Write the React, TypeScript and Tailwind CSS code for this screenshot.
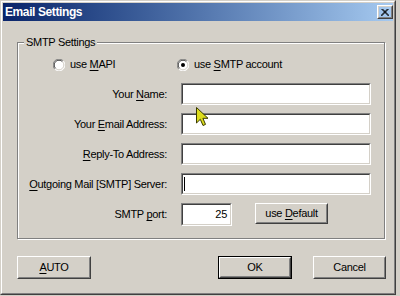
import React from "react";

const font = { fontFamily: '"Liberation Sans", Arial, sans-serif' };

function U({ children }: { children: React.ReactNode }) {
  return <span className="underline underline-offset-[2px] decoration-1">{children}</span>;
}

function Sunken({ className = "", children }: { className?: string; children?: React.ReactNode }) {
  return (
    <div className={`border border-t-[#808080] border-l-[#808080] border-r-white border-b-white ${className}`}>
      <div className="h-full w-full border border-t-[#404040] border-l-[#404040] border-r-[#d4d0c8] border-b-[#d4d0c8] bg-white flex items-center">
        {children}
      </div>
    </div>
  );
}

function Button({
  className = "",
  children,
  isDefault = false,
}: {
  className?: string;
  children: React.ReactNode;
  isDefault?: boolean;
}) {
  const inner = (
    <div className="h-full w-full border border-t-white border-l-white border-r-[#404040] border-b-[#404040]">
      <div className="h-full w-full border border-t-[#d4d0c8] border-l-[#d4d0c8] border-r-[#808080] border-b-[#808080] flex items-center justify-center text-black">
        {children}
      </div>
    </div>
  );
  if (isDefault) {
    return <div className={`border border-black ${className}`}>{inner}</div>;
  }
  return <div className={className}>{inner}</div>;
}

function Radio({ checked }: { checked: boolean }) {
  return (
    <svg width="12" height="12" viewBox="0 0 12 12" className="shrink-0">
      <circle cx="6" cy="6" r="5.5" fill="#ffffff" />
      <path d="M1.8 10.2 A5.5 5.5 0 0 1 10.2 1.8" stroke="#808080" strokeWidth="1" fill="none" />
      <path d="M2.6 9.4 A4.5 4.5 0 0 1 9.4 2.6" stroke="#404040" strokeWidth="1" fill="none" />
      <path d="M10.2 1.8 A5.5 5.5 0 0 1 1.8 10.2" stroke="#ffffff" strokeWidth="1" fill="none" />
      <path d="M9.4 2.6 A4.5 4.5 0 0 1 2.6 9.4" stroke="#d4d0c8" strokeWidth="1" fill="none" />
      {checked && <circle cx="6" cy="6" r="2" fill="#000000" />}
    </svg>
  );
}

export default function App() {
  return (
    <div
      className="w-[400px] h-[296px] bg-[#d4d0c8] relative overflow-hidden text-[11px] tracking-[-0.3px] text-black"
      style={font}
    >
      <div className="w-[396px] h-[295px] border border-t-[#d4d0c8] border-l-[#d4d0c8] border-r-[#404040] border-b-[#404040]">
        <div className="h-full w-full border border-t-white border-l-white border-r-[#808080] border-b-[#808080] p-px flex flex-col">
          {/* Title bar */}
          <div className="h-[18px] shrink-0 flex items-center justify-between pl-[2px] bg-gradient-to-r from-[#0a246a] to-[#a6caf0]">
            <span className="text-white font-bold text-[12px] tracking-[-0.4px] leading-none">Email Settings</span>
            <Button className="w-[16px] h-[14px]">
              <svg width="8" height="7" viewBox="0 0 8 7">
                <path d="M0.5 0 L7.5 7 M1.5 0 L8.5 7 M7.5 0 L0.5 7 M6.5 0 L-0.5 7" stroke="#000" strokeWidth="1" />
              </svg>
            </Button>
          </div>

          {/* Body */}
          <div className="flex-1 flex flex-col pl-[14px] pt-[21px]">
            <div className="relative w-[368px] h-[197px] border border-[#808080] shadow-[1px_1px_0_0_#ffffff,inset_1px_1px_0_0_#ffffff] flex flex-col pt-[15px]">
              <span className="absolute left-[6px] -top-[8px] px-[2px] bg-[#d4d0c8] leading-[14px]">SMTP Settings</span>

              <div className="flex items-center h-[13px] pl-[35px]">
                <div className="flex items-center gap-[5px] w-[124px]">
                  <Radio checked={false} />
                  <span>
                    use <U>M</U>API
                  </span>
                </div>
                <div className="flex items-center gap-[5px]">
                  <Radio checked={true} />
                  <span>
                    use <U>S</U>MTP account
                  </span>
                </div>
              </div>

              <div className="grid grid-cols-[149px_190px] gap-x-[14px] gap-y-[8px] mt-[12px]">
                <div className="h-[22px] flex items-center justify-end">
                  <span>
                    Your <U>N</U>ame:
                  </span>
                </div>
                <Sunken className="h-[22px]" />

                <div className="h-[22px] flex items-center justify-end">
                  <span>
                    Your <U>E</U>mail Address:
                  </span>
                </div>
                <Sunken className="h-[22px]" />

                <div className="h-[22px] flex items-center justify-end">
                  <span>
                    <U>R</U>eply-To Address:
                  </span>
                </div>
                <Sunken className="h-[22px]" />

                <div className="h-[22px] flex items-center justify-end">
                  <span>
                    <U>O</U>utgoing Mail [SMTP] Server:
                  </span>
                </div>
                <Sunken className="h-[22px]">
                  <div className="ml-[1px] w-px h-[14px] bg-black" />
                </Sunken>

                <div className="h-[23px] flex items-center justify-end">
                  <span>
                    SMTP <U>p</U>ort:
                  </span>
                </div>
                <div className="flex items-center gap-[23px]">
                  <Sunken className="h-[23px] w-[51px]">
                    <span className="w-full text-right pr-[3px]">25</span>
                  </Sunken>
                  <Button className="h-[21px] w-[73px] self-start">
                    <span>
                      use <U>D</U>efault
                    </span>
                  </Button>
                </div>
              </div>
            </div>

            <div className="flex items-center mt-[17px] h-[23px]">
              <Button className="w-[74px] h-[23px]">
                <span>
                  <U>A</U>UTO
                </span>
              </Button>
              <Button className="w-[74px] h-[23px] ml-[127px]" isDefault>
                <span>OK</span>
              </Button>
              <Button className="w-[73px] h-[23px] ml-[21px]">
                <span>Cancel</span>
              </Button>
            </div>
          </div>
        </div>
      </div>

      {/* mouse cursor overlay */}
      <svg className="absolute left-[196px] top-[107px]" width="13" height="20" viewBox="0 0 13 20">
        <path
          d="M0.5 0.5 L0.5 16 L4.3 12.3 L7 18.5 L9.5 17.4 L6.9 11.3 L12 11.3 Z"
          fill="#dcdc1c"
          stroke="#3a3a00"
          strokeWidth="1"
          strokeLinejoin="miter"
        />
      </svg>
    </div>
  );
}
